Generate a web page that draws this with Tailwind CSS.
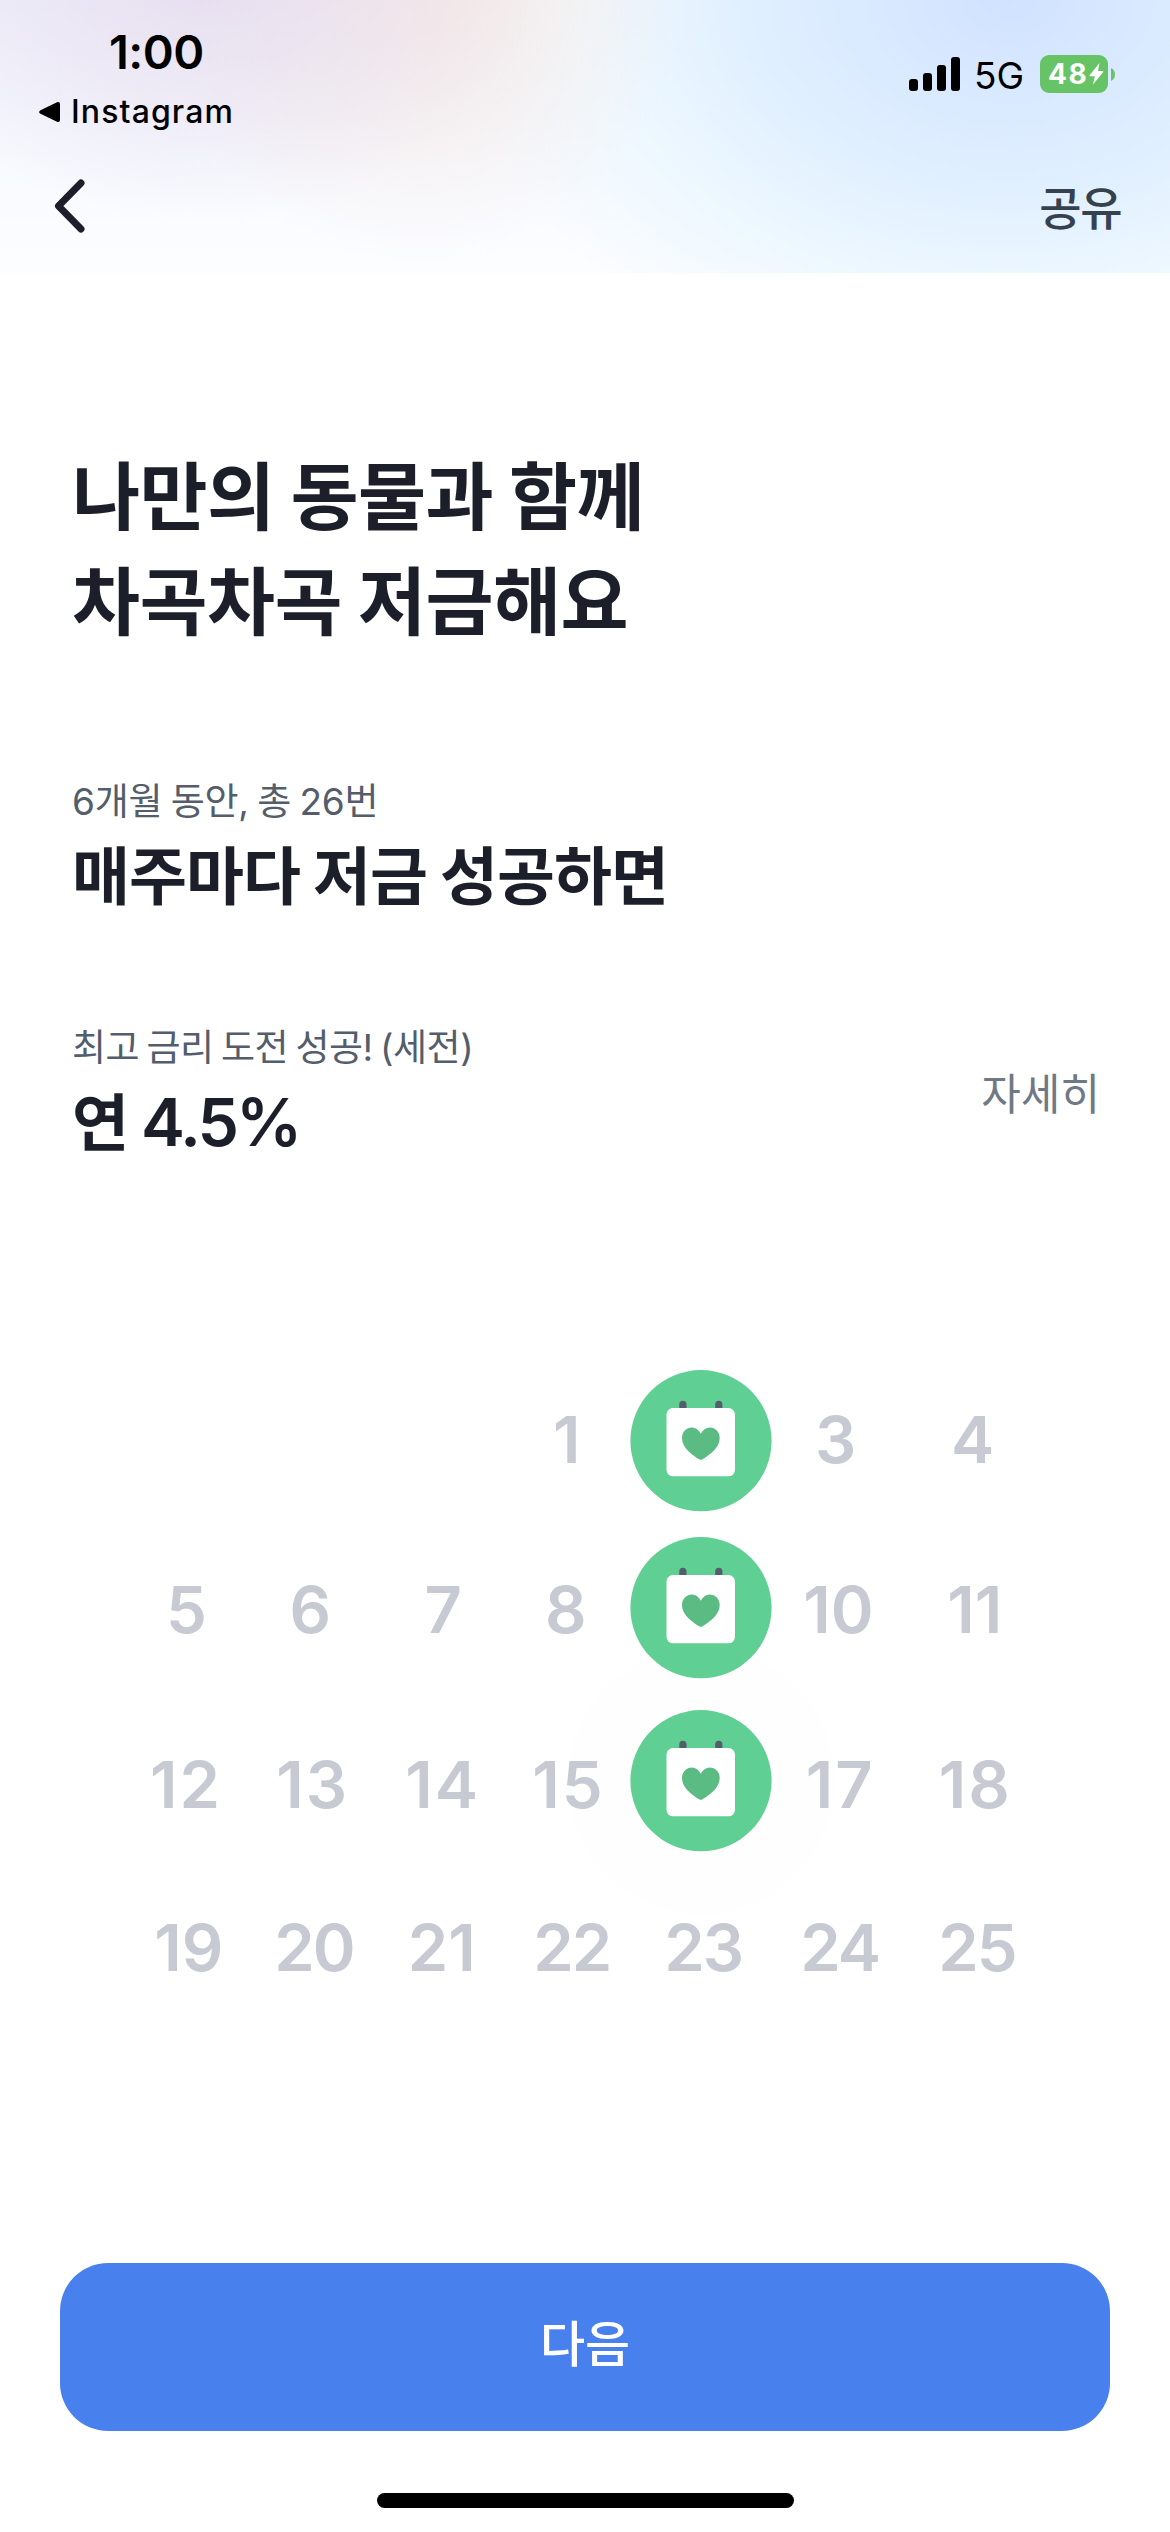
<!DOCTYPE html>
<html lang="ko">
<head>
<meta charset="utf-8">
<title>저금 챌린지</title>
<script src="https://cdn.jsdelivr.net/npm/@tailwindcss/browser@4"></script>
</head>
<body class="bg-white">
<svg class="hidden">
  <symbol id="stamp" viewBox="0 0 142 142">
    <circle cx="71" cy="70.700" r="70.600" fill="#60cf93"/>
    <path d="M49.300 40v-5.600a3.600 3.600 0 0 1 7.200 0V40zM85.200 40v-5.600a3.600 3.600 0 0 1 7.200 0V40z" fill="#535d6b"/>
    <rect x="36.500" y="38" width="68.500" height="68.300" rx="6.500" fill="#fff"/>
    <path d="M70.800 63.800C68.500 59.600 65.500 57.600 62 57.600c-5.700 0-10 4.600-10 10.400 0 9.500 9.500 16.800 17.100 21.200 1.200.7 2.200.7 3.400 0C80.100 84.800 89.700 77.500 89.700 68c0-5.800-4.400-10.400-10-10.400-3.500 0-6.600 2-8.900 6.200z" fill="#5abb83"/>
  </symbol>
</svg>
<div class="relative flex h-[2532px] w-[1170px] flex-col overflow-hidden bg-white font-['Noto_Sans_CJK_KR',sans-serif] text-[#1c1f2a]">

  <header class="flex h-[273px] shrink-0 flex-col bg-[radial-gradient(ellipse_340px_250px_at_205px_-30px,#e7deef,#e7deef00),radial-gradient(ellipse_270px_290px_at_420px_-30px,#f6e9e4,#f6e9e490_45%,#f6e9e400),radial-gradient(ellipse_560px_400px_at_1010px_0px,#d1e2ff,#e1f0ff_48%,#f0f9ff_78%,#f8fcff00),linear-gradient(#f0f2fc,#f7faff_60%,#fcfdff)]">
    <div class="flex h-[150px] justify-between font-['Inter',sans-serif] text-black">
      <div class="pl-[38px] pt-[22px]">
        <div class="pl-[71px] text-[47px] leading-[60px] font-semibold tracking-[-0.5px]">1:00</div>
        <div class="flex items-center gap-[10px] pt-[10px]">
          <svg class="h-[22px] w-[23px]" viewBox="0 0 23 22"><path d="M2.500 9.200 19 1.300q3-1 3 2v15.500q0 3-3 2L2.500 12.800q-2.800-1.800 0-3.600z"/></svg>
          <div class="text-[32px] leading-[40px] font-medium tracking-[1.1px]">Instagram</div>
        </div>
      </div>
      <div class="mt-[55px] flex h-[38px] items-center pr-[55px]">
        <svg class="mr-[14px] h-[34px] w-[51px]" viewBox="0 0 51 34"><rect y="22" width="9" height="12" rx="3"/><rect x="14" y="16" width="9" height="18" rx="3"/><rect x="28" y="8" width="9" height="26" rx="3"/><rect x="42" width="9" height="34" rx="3"/></svg>
        <div class="mr-[16px] pt-[4px] text-[37px] leading-[40px]">5G</div>
        <div class="flex h-[38px] w-[68px] items-center rounded-[9px] bg-[#66c466] pl-[8px] text-[28px] font-bold tracking-[1.5px] text-white">48
          <svg class="ml-px h-[22px] w-[15px] shrink-0" viewBox="0 0 15 22"><path d="M10.500 0 .5 12.200q-.5 1 .7 1h4.600L4 21.500l10.300-12.400q.5-1-.7-1H9z" fill="#fff"/></svg>
        </div>
        <svg class="ml-[3px] h-[13px] w-[4px]" viewBox="0 0 4 13"><path d="M0 0q4 2 4 6.500T0 13z" fill="#66c466"/></svg>
      </div>
    </div>
    <nav class="flex h-[116px] items-center justify-between pr-[49px] pl-[53px]">
      <svg class="mb-[4px] h-[56px] w-[34px]" viewBox="0 0 34 56"><path d="M28 5 5.500 28 28 51" fill="none" stroke="#1c1f2a" stroke-width="7" stroke-linecap="round" stroke-linejoin="round"/></svg>
      <div class="pb-[6px] text-[46px] leading-[60px] font-medium tracking-[-1.5px] text-[#36414f]">공유</div>
    </nav>
  </header>

  <main class="flex h-[1990px] shrink-0 flex-col">
    <h1 class="mt-[166px] pl-[72px] text-[74px] leading-[105px] font-semibold tracking-[-0.6px] [word-spacing:-4px]">나만의 동물과 함께<br>차곡차곡 저금해요</h1>

    <section class="mt-[128px] pl-[72px]">
      <p class="h-[55px] font-['Inter','Noto_Sans_CJK_KR',sans-serif] text-[37px] leading-[50px] tracking-[-0.3px] text-[#535d6b] [word-spacing:-1.5px]">6개월 동안, 총 26번</p>
      <p class="text-[63px] leading-[80px] font-semibold tracking-[-1px] [word-spacing:-3.5px]">매주마다 저금 성공하면</p>
    </section>

    <section class="mt-[111px] flex justify-between pr-[70px] pl-[72px]">
      <div>
        <p class="h-[56px] font-['Inter','Noto_Sans_CJK_KR',sans-serif] text-[37px] leading-[50px] tracking-[-0.5px] text-[#535d6b] [word-spacing:-2.5px]">최고 금리 도전 성공! (세전)</p>
        <p class="flex h-[83px] items-baseline gap-[12px] text-[62px] leading-[80px] font-semibold">연 <span class="font-['Inter',sans-serif] text-[66px] tracking-[-2.9px]">4.5%</span></p>
      </div>
      <p class="mt-[38px] text-[43px] leading-[60px] text-[#6f7985]">자세히</p>
    </section>

    <section class="relative mt-[208px] h-[650px] font-['Inter',sans-serif] text-[65px] leading-[142px] font-semibold text-[#c7cad3]">
      <div class="absolute top-[277px] left-[568px] size-[267px] rounded-full bg-[#fefefe]"></div>
      <div class="relative mb-[25px] grid h-[142px] grid-cols-[77px_185px_136px_100px] pl-[553px]">
        <span class="-mt-px">1</span><svg class="size-[142px]"><use href="#stamp"/></svg><span class="-mt-px">3</span><span class="-mt-px">4</span>
      </div>
      <div class="relative mb-[31px] grid h-[142px] grid-cols-[123.500px_135px_120.500px_85px_173.300px_144px_100px] pl-[166px]">
        <span class="pt-[2px]">5</span><span class="pt-[2px]">6</span><span class="pt-[2px]">7</span><span class="pt-[2px]">8</span><svg class="size-[142px]"><use href="#stamp"/></svg><span class="pt-[2px]">10</span><span class="pt-[2px]">11</span>
      </div>
      <div class="relative mb-[25px] grid h-[142px] grid-cols-[126.300px_129px_127px_97.700px_175.800px_133px_100px] pl-[150px] tracking-[2px]">
        <span class="pt-[4px]">12</span><span class="pt-[4px]">13</span><span class="pt-[4px]">14</span><span class="pt-[4px]">15</span><svg class="size-[142px]"><use href="#stamp"/></svg><span class="pt-[4px]">17</span><span class="pt-[4px]">18</span>
      </div>
      <div class="relative grid h-[142px] grid-cols-[120px_134.500px_124.500px_131px_136px_138px_100px] pl-[154.300px] tracking-[-2px]">
        <span class="tracking-normal">19</span><span>20</span><span class="-ml-px tracking-normal">21</span><span>22</span><span>23</span><span>24</span><span>25</span>
      </div>
    </section>
  </main>

  <footer class="flex flex-col items-center">
    <button class="h-[168px] w-[1050px] rounded-[48px] bg-[#4880ee] pb-[12px] text-[49px] font-medium text-white">다음</button>
    <div class="mt-[62px] h-[15px] w-[417px] rounded-full bg-black"></div>
  </footer>
</div>
</body>
</html>
